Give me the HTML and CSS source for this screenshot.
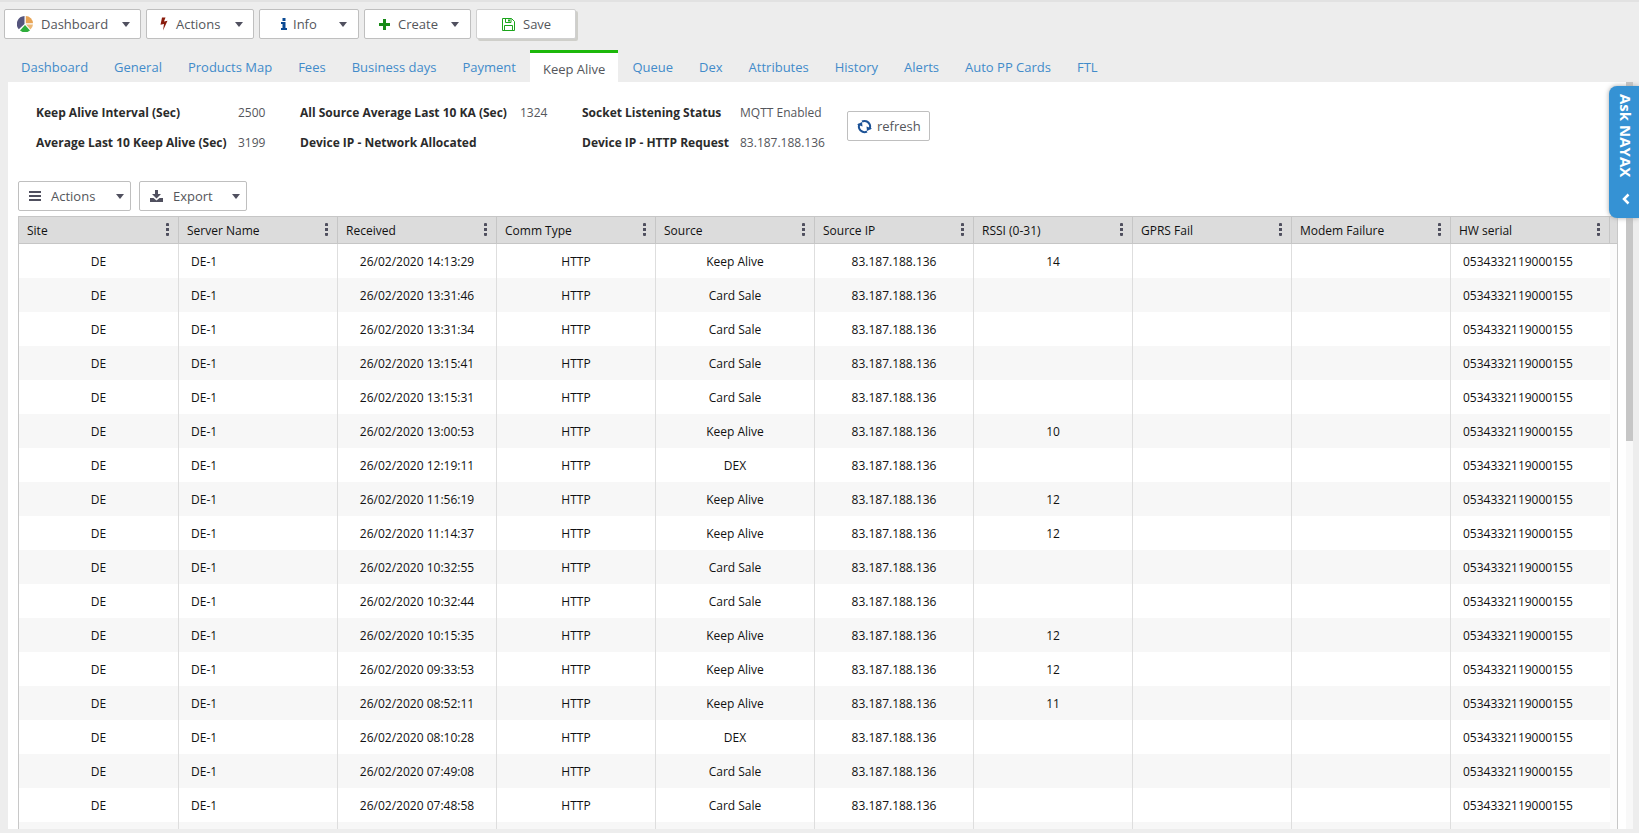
FILE: index.html
```html
<!DOCTYPE html>
<html lang="en">
<head>
<meta charset="utf-8">
<title>Keep Alive</title>
<link rel="stylesheet" href="styles.css">
</head>
<body>
<div class="page">
  <header class="toolbar">
    <button class="btn btn-dashboard" type="button">
      <svg class="icon" width="16" height="16" viewBox="0 0 16 16"><path d="M7.500 8V0A8 8 0 0 0 1.800 13.200Z" fill="#55557d"/><path d="M8.800 7.200V0A7.500 7.500 0 0 1 16 7.200Z" fill="#e8a455"/><path d="M9 8.500H16A7.500 7.500 0 0 1 13.500 13.500Z" fill="#ecb877"/><path d="M8 9L13 14.500A8 8 0 0 1 3 14.500Z" fill="#2fae3c"/></svg>
      <span>Dashboard</span><span class="caret"></span>
    </button>
    <button class="btn btn-actions" type="button">
      <svg class="icon" width="8" height="14" viewBox="0 0 8 14"><path d="M2 0.500H5.500L4 4.500L7.500 3.800L3 13.500L4 7L0.500 7.800Z" fill="#8a1c0c"/></svg>
      <span>Actions</span><span class="caret"></span>
    </button>
    <button class="btn btn-info" type="button">
      <svg class="icon" width="6" height="12" viewBox="0 0 6 12"><path d="M1.500 0H4.500V3H1.500ZM0 4H4.500V10H6V12H0V10H1.500V6H0Z" fill="#0b4a94"/></svg>
      <span>Info</span><span class="caret"></span>
    </button>
    <button class="btn btn-create" type="button">
      <svg class="icon" width="11" height="11" viewBox="0 0 11 11"><path d="M4 0H7V4H11V7H7V11H4V7H0V4H4Z" fill="#178a17"/></svg>
      <span>Create</span><span class="caret"></span>
    </button>
    <button class="btn btn-save" type="button">
      <svg class="icon" width="13" height="13" viewBox="0 0 13 13" fill="none" stroke="#1ba51b"><path d="M0.500 0.500H9.500L12.500 3.500V12.500H0.500Z"/><path d="M3.500 0.500V4.500H9V0.500M2.500 12.500V7.500H10.500V12.500"/><path d="M7 1.500V3.500" stroke-width="2"/></svg>
      <span>Save</span>
    </button>
  </header>

  <nav class="tabs">
    <a class="tab" href="#">Dashboard</a>
    <a class="tab" href="#">General</a>
    <a class="tab" href="#">Products Map</a>
    <a class="tab" href="#">Fees</a>
    <a class="tab" href="#">Business days</a>
    <a class="tab" href="#">Payment</a>
    <a class="tab active" href="#" aria-current="page">Keep Alive</a>
    <a class="tab" href="#">Queue</a>
    <a class="tab" href="#">Dex</a>
    <a class="tab" href="#">Attributes</a>
    <a class="tab" href="#">History</a>
    <a class="tab" href="#">Alerts</a>
    <a class="tab" href="#">Auto PP Cards</a>
    <a class="tab" href="#">FTL</a>
  </nav>

  <main class="panel">
    <div class="content">
      <section class="summary">
        <dl class="facts facts-a">
          <dt>Keep Alive Interval (Sec)</dt><dd>2500</dd>
          <dt>Average Last 10 Keep Alive (Sec)</dt><dd>3199</dd>
        </dl>
        <dl class="facts facts-b">
          <dt>All Source Average Last 10 KA (Sec)</dt><dd>1324</dd>
          <dt>Device IP - Network Allocated</dt><dd></dd>
        </dl>
        <dl class="facts facts-c">
          <dt>Socket Listening Status</dt><dd>MQTT Enabled</dd>
          <dt>Device IP - HTTP Request</dt><dd>83.187.188.136</dd>
        </dl>
        <button class="btn btn-refresh" type="button">
          <svg class="icon" width="15" height="15" viewBox="0 0 15 15"><path d="M5.500 12.700A5.500 5.500 0 0 1 2.500 5M5 2.500A5.500 5.500 0 0 1 12.300 5M9.500 2.300A5.500 5.500 0 0 1 12.500 10M10 12.500A5.500 5.500 0 0 1 4 11.800" fill="none" stroke="#1c5296" stroke-width="2"/><path d="M0 5.500L5 3L5.500 7.500ZM15 9.500L10 12L9.500 7.500Z" fill="#1c5296"/></svg>
          <span>refresh</span>
        </button>
      </section>

      <div class="grid-tools">
        <button class="btn btn-rows" type="button">
          <svg class="icon" width="12" height="11" viewBox="0 0 12 11"><path d="M0 0H12V2H0ZM0 4H12V6H0ZM0 8H12V10H0Z" fill="#50505f"/></svg>
          <span>Actions</span><span class="caret"></span>
        </button>
        <button class="btn btn-export" type="button">
          <svg class="icon" width="13" height="12" viewBox="0 0 13 12"><path d="M5 0H8V4H11L6.500 8.500L2 4H5ZM0 8H3.500L6.500 10.500L9.500 8H13V12H0Z" fill="#50505f"/></svg>
          <span>Export</span><span class="caret"></span>
        </button>
      </div>

      <table class="grid">
        <colgroup><col class="site"><col><col><col><col><col><col><col><col><col><col class="gutter"></colgroup>
        <thead>
          <tr>
            <th><span class="head">Site<i class="dots"></i></span></th>
            <th><span class="head">Server Name<i class="dots"></i></span></th>
            <th><span class="head">Received<i class="dots"></i></span></th>
            <th><span class="head">Comm Type<i class="dots"></i></span></th>
            <th><span class="head">Source<i class="dots"></i></span></th>
            <th><span class="head">Source IP<i class="dots"></i></span></th>
            <th><span class="head">RSSI (0-31)<i class="dots"></i></span></th>
            <th><span class="head">GPRS Fail<i class="dots"></i></span></th>
            <th><span class="head">Modem Failure<i class="dots"></i></span></th>
            <th><span class="head">HW serial<i class="dots"></i></span></th>
            <th></th>
          </tr>
        </thead>
        <tbody>
          <tr><td>DE</td><td>DE-1</td><td>26/02/2020 14:13:29</td><td>HTTP</td><td>Keep Alive</td><td>83.187.188.136</td><td>14</td><td></td><td></td><td>0534332119000155</td><td></td></tr>
          <tr><td>DE</td><td>DE-1</td><td>26/02/2020 13:31:46</td><td>HTTP</td><td>Card Sale</td><td>83.187.188.136</td><td></td><td></td><td></td><td>0534332119000155</td><td></td></tr>
          <tr><td>DE</td><td>DE-1</td><td>26/02/2020 13:31:34</td><td>HTTP</td><td>Card Sale</td><td>83.187.188.136</td><td></td><td></td><td></td><td>0534332119000155</td><td></td></tr>
          <tr><td>DE</td><td>DE-1</td><td>26/02/2020 13:15:41</td><td>HTTP</td><td>Card Sale</td><td>83.187.188.136</td><td></td><td></td><td></td><td>0534332119000155</td><td></td></tr>
          <tr><td>DE</td><td>DE-1</td><td>26/02/2020 13:15:31</td><td>HTTP</td><td>Card Sale</td><td>83.187.188.136</td><td></td><td></td><td></td><td>0534332119000155</td><td></td></tr>
          <tr><td>DE</td><td>DE-1</td><td>26/02/2020 13:00:53</td><td>HTTP</td><td>Keep Alive</td><td>83.187.188.136</td><td>10</td><td></td><td></td><td>0534332119000155</td><td></td></tr>
          <tr><td>DE</td><td>DE-1</td><td>26/02/2020 12:19:11</td><td>HTTP</td><td>DEX</td><td>83.187.188.136</td><td></td><td></td><td></td><td>0534332119000155</td><td></td></tr>
          <tr><td>DE</td><td>DE-1</td><td>26/02/2020 11:56:19</td><td>HTTP</td><td>Keep Alive</td><td>83.187.188.136</td><td>12</td><td></td><td></td><td>0534332119000155</td><td></td></tr>
          <tr><td>DE</td><td>DE-1</td><td>26/02/2020 11:14:37</td><td>HTTP</td><td>Keep Alive</td><td>83.187.188.136</td><td>12</td><td></td><td></td><td>0534332119000155</td><td></td></tr>
          <tr><td>DE</td><td>DE-1</td><td>26/02/2020 10:32:55</td><td>HTTP</td><td>Card Sale</td><td>83.187.188.136</td><td></td><td></td><td></td><td>0534332119000155</td><td></td></tr>
          <tr><td>DE</td><td>DE-1</td><td>26/02/2020 10:32:44</td><td>HTTP</td><td>Card Sale</td><td>83.187.188.136</td><td></td><td></td><td></td><td>0534332119000155</td><td></td></tr>
          <tr><td>DE</td><td>DE-1</td><td>26/02/2020 10:15:35</td><td>HTTP</td><td>Keep Alive</td><td>83.187.188.136</td><td>12</td><td></td><td></td><td>0534332119000155</td><td></td></tr>
          <tr><td>DE</td><td>DE-1</td><td>26/02/2020 09:33:53</td><td>HTTP</td><td>Keep Alive</td><td>83.187.188.136</td><td>12</td><td></td><td></td><td>0534332119000155</td><td></td></tr>
          <tr><td>DE</td><td>DE-1</td><td>26/02/2020 08:52:11</td><td>HTTP</td><td>Keep Alive</td><td>83.187.188.136</td><td>11</td><td></td><td></td><td>0534332119000155</td><td></td></tr>
          <tr><td>DE</td><td>DE-1</td><td>26/02/2020 08:10:28</td><td>HTTP</td><td>DEX</td><td>83.187.188.136</td><td></td><td></td><td></td><td>0534332119000155</td><td></td></tr>
          <tr><td>DE</td><td>DE-1</td><td>26/02/2020 07:49:08</td><td>HTTP</td><td>Card Sale</td><td>83.187.188.136</td><td></td><td></td><td></td><td>0534332119000155</td><td></td></tr>
          <tr><td>DE</td><td>DE-1</td><td>26/02/2020 07:48:58</td><td>HTTP</td><td>Card Sale</td><td>83.187.188.136</td><td></td><td></td><td></td><td>0534332119000155</td><td></td></tr>
          <tr><td></td><td></td><td></td><td></td><td></td><td></td><td></td><td></td><td></td><td></td><td></td></tr>
        </tbody>
      </table>
    </div>
    <div class="scroll-track"><div class="scroll-thumb"></div></div>
  </main>
</div>

<button class="ask" type="button">
  <span>Ask NAYAX</span>
  <svg width="8" height="12" viewBox="0 0 8 12"><path d="M6.500 1.500L2 6L6.500 10.500" fill="none" stroke="#fff" stroke-width="2.500"/></svg>
</button>
</body>
</html>
```

FILE: styles.css
```css
* { box-sizing: border-box; }

body {
  margin: 0;
  background: #ededed;
  color: #54565b;
  font: 13px/20px "Open Sans", "Noto Sans", sans-serif;
}

.page {
  display: flex;
  flex-direction: column;
  height: 100vh;
  padding: 7px 6px 4px 8px;
  border-top: 2px solid #e2e2e2;
  overflow: hidden;
}

.toolbar {
  display: flex;
  gap: 5px;
  margin-left: -4px;
}

.btn {
  display: flex;
  align-items: center;
  gap: 8px;
  height: 30px;
  padding: 0 11px 0 12px;
  border: 1px solid #bfbfbf;
  border-radius: 2px;
  background: #fff;
  color: inherit;
  font: inherit;
  white-space: nowrap;
}

.icon { flex: none; }

.caret {
  width: 8px;
  margin-left: auto;
  border: 4px solid transparent;
  border-top: 5px solid #50505f;
  border-bottom: 0;
}

.btn-dashboard { width: 137px; padding-right: 10px; }
.btn-actions { width: 108px; padding-left: 13px; padding-right: 10px; }
.btn-info { width: 100px; padding-left: 21px; gap: 6px; }
.btn-create { width: 107px; padding-left: 14px; }
.btn-save {
  width: 100px;
  padding-left: 25px;
  border-color: #d0d0d0;
  box-shadow: 2px 2px 0 #cfcfca;
}

.tabs {
  display: flex;
  gap: 2px;
  margin: 11px 0 0 1px;
}

.tab {
  height: 32px;
  padding: 7px 12px 0;
  color: #428bca;
  text-decoration: none;
  white-space: nowrap;
}

.tab.active {
  border-top: 3px solid #1cb80a;
  padding: 6px 13px 0;
  background: #fff;
  color: #54565b;
}

.panel {
  display: flex;
  flex: 1;
  min-height: 0;
  background: #fff;
}

.content {
  flex: 1;
  min-width: 0;
  padding: 16px 8px 0 10px;
  overflow: hidden;
}

.summary {
  display: flex;
  align-items: flex-start;
  padding-left: 18px;
}

.facts {
  display: grid;
  grid-auto-rows: 30px;
  margin: 0;
  font-size: 12px;
  line-height: 30px;
  white-space: nowrap;
}

.facts dt { color: #2b2b2b; font-weight: 700; }
.facts dd { margin: 0; }
.facts-a { grid-template-columns: 202px 62px; }
.facts-b { grid-template-columns: 220px 62px; }
.facts-c { grid-template-columns: 158px 107px; }

.btn-refresh { margin-top: 13px; padding: 0 8px 0 9px; gap: 5px; }

.grid-tools {
  display: flex;
  gap: 8px;
  margin: 23px 0 5px;
}

.btn-rows { width: 113px; padding: 0 6px 0 10px; gap: 10px; }
.btn-export { width: 108px; padding: 0 6px 0 10px; gap: 10px; }

.grid {
  width: 100%;
  table-layout: fixed;
  border-collapse: separate;
  border-spacing: 0;
  border: solid #c8c8c8;
  border-width: 0 1px;
  color: #111;
  font-size: 12px;
}

.site { width: 160px; }
.gutter { width: 7px; }

.grid th {
  height: 28px;
  padding: 1px 9px 0 8px;
  border: solid #c6c6c6;
  border-width: 1px 1px 1px 0;
  background: #dcdcdc;
  font-weight: 400;
  text-align: left;
}

.head {
  display: flex;
  align-items: center;
  justify-content: space-between;
}

.dots {
  width: 3px;
  height: 13px;
  margin-bottom: 3px;
  background: repeating-linear-gradient(#50505f 0 3px, transparent 3px 5px);
  border-radius: 1px;
}

.grid td {
  height: 34px;
  padding: 2px 8px 0;
  border-right: 1px solid #dedede;
  text-align: center;
  white-space: nowrap;
}

.grid tbody tr:nth-child(even) { background: #f7f7f7; }
.grid td:nth-child(2), .grid td:nth-child(10) { padding-left: 12px; text-align: left; }
.grid td:nth-child(10) { border-right: 0; }
.grid th:last-child, .grid td:last-child { padding: 0; border-right: 0; }
.grid td:last-child { background: #fbfbfb; }

.scroll-track { width: 7px; background: #f8f8f8; }
.scroll-thumb { height: 48%; background: #c6c6c6; }

.ask {
  position: absolute;
  top: 86px;
  right: 0;
  display: flex;
  flex-direction: column;
  align-items: center;
  gap: 16px;
  width: 30px;
  padding: 8px 2px 13px 5px;
  border: 0;
  border-radius: 8px 0 0 8px;
  background: #3592d4;
  box-shadow: 0 0 5px #a8a8a8;
  color: #fff;
  font: 700 15px/22px "Open Sans", "Noto Sans", sans-serif;
}

.ask span { writing-mode: vertical-rl; }
```
